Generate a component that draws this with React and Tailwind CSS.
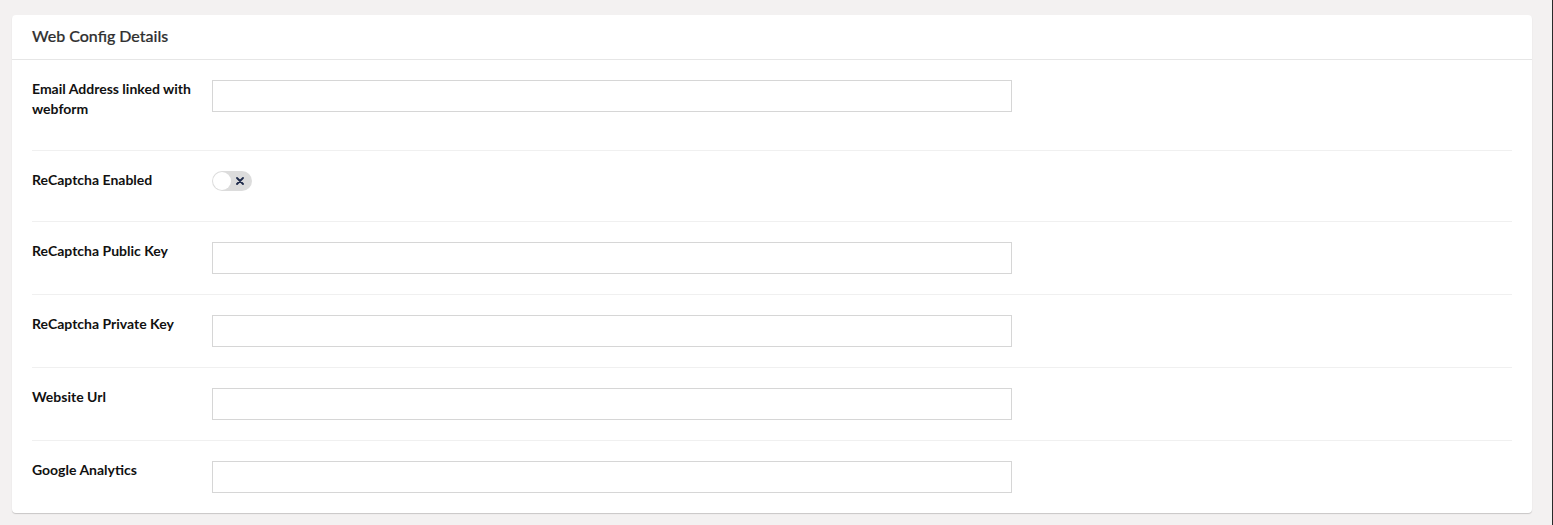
import React, { useState } from 'react';

const fields = [
  { label: 'Email Address linked with webform', type: 'input' },
  { label: 'ReCaptcha Enabled', type: 'toggle' },
  { label: 'ReCaptcha Public Key', type: 'input' },
  { label: 'ReCaptcha Private Key', type: 'input' },
  { label: 'Website Url', type: 'input' },
  { label: 'Google Analytics', type: 'input' },
];

const Toggle = ({ on, onChange }) => (
  <button
    type="button"
    onClick={() => onChange(!on)}
    className="relative w-10 h-5 rounded-full bg-[#dcdcdc] flex items-center"
  >
    <span className="absolute left-[1px] top-[1px] w-[18px] h-[18px] rounded-full bg-white" />
    <svg className="absolute left-[24px] top-[6px]" width="8" height="8" viewBox="0 0 8 8">
      <path d="M1 1L7 7M7 1L1 7" stroke="#1e2a4a" strokeWidth="1.8" strokeLinecap="round" />
    </svg>
  </button>
);

const App = () => {
  const [recaptcha, setRecaptcha] = useState(false);

  return (
    <div className="min-h-screen bg-[#f3f1f1] border-r border-[#2a2a2a] pt-[15px] pl-3 pr-5 pb-3 font-['Lato','Liberation_Sans',sans-serif]">
      <div className="bg-white rounded-[4px] shadow-[0_1px_1px_rgba(0,0,0,0.18)]">
        {/* Header */}
        <div className="h-[45px] px-5 pb-[2px] flex items-center border-b border-[#e6e6e6]">
          <h2 className="text-[16px] text-[#303030] font-medium [-webkit-text-stroke:0.2px_#303030]">Web Config Details</h2>
        </div>

        {/* Rows */}
        <div className="px-5">
          {fields.map((f, i) => (
            <div
              key={f.label}
              className={`flex items-start py-5 ${i < fields.length - 1 ? 'border-b border-[#f0f0f0]' : ''}`}
            >
              <label className="w-[180px] pr-4 mb-[10px] -mt-[1px] pb-[1px] text-[14px] leading-5 font-bold text-[#111]">
                {f.label}
              </label>
              {f.type === 'input' ? (
                <input
                  type="text"
                  className="w-[800px] h-8 border border-[#d6d6d6] bg-white px-2 text-[13px] outline-none"
                />
              ) : (
                <Toggle on={recaptcha} onChange={setRecaptcha} />
              )}
            </div>
          ))}
        </div>
      </div>
    </div>
  );
};

export default App;
